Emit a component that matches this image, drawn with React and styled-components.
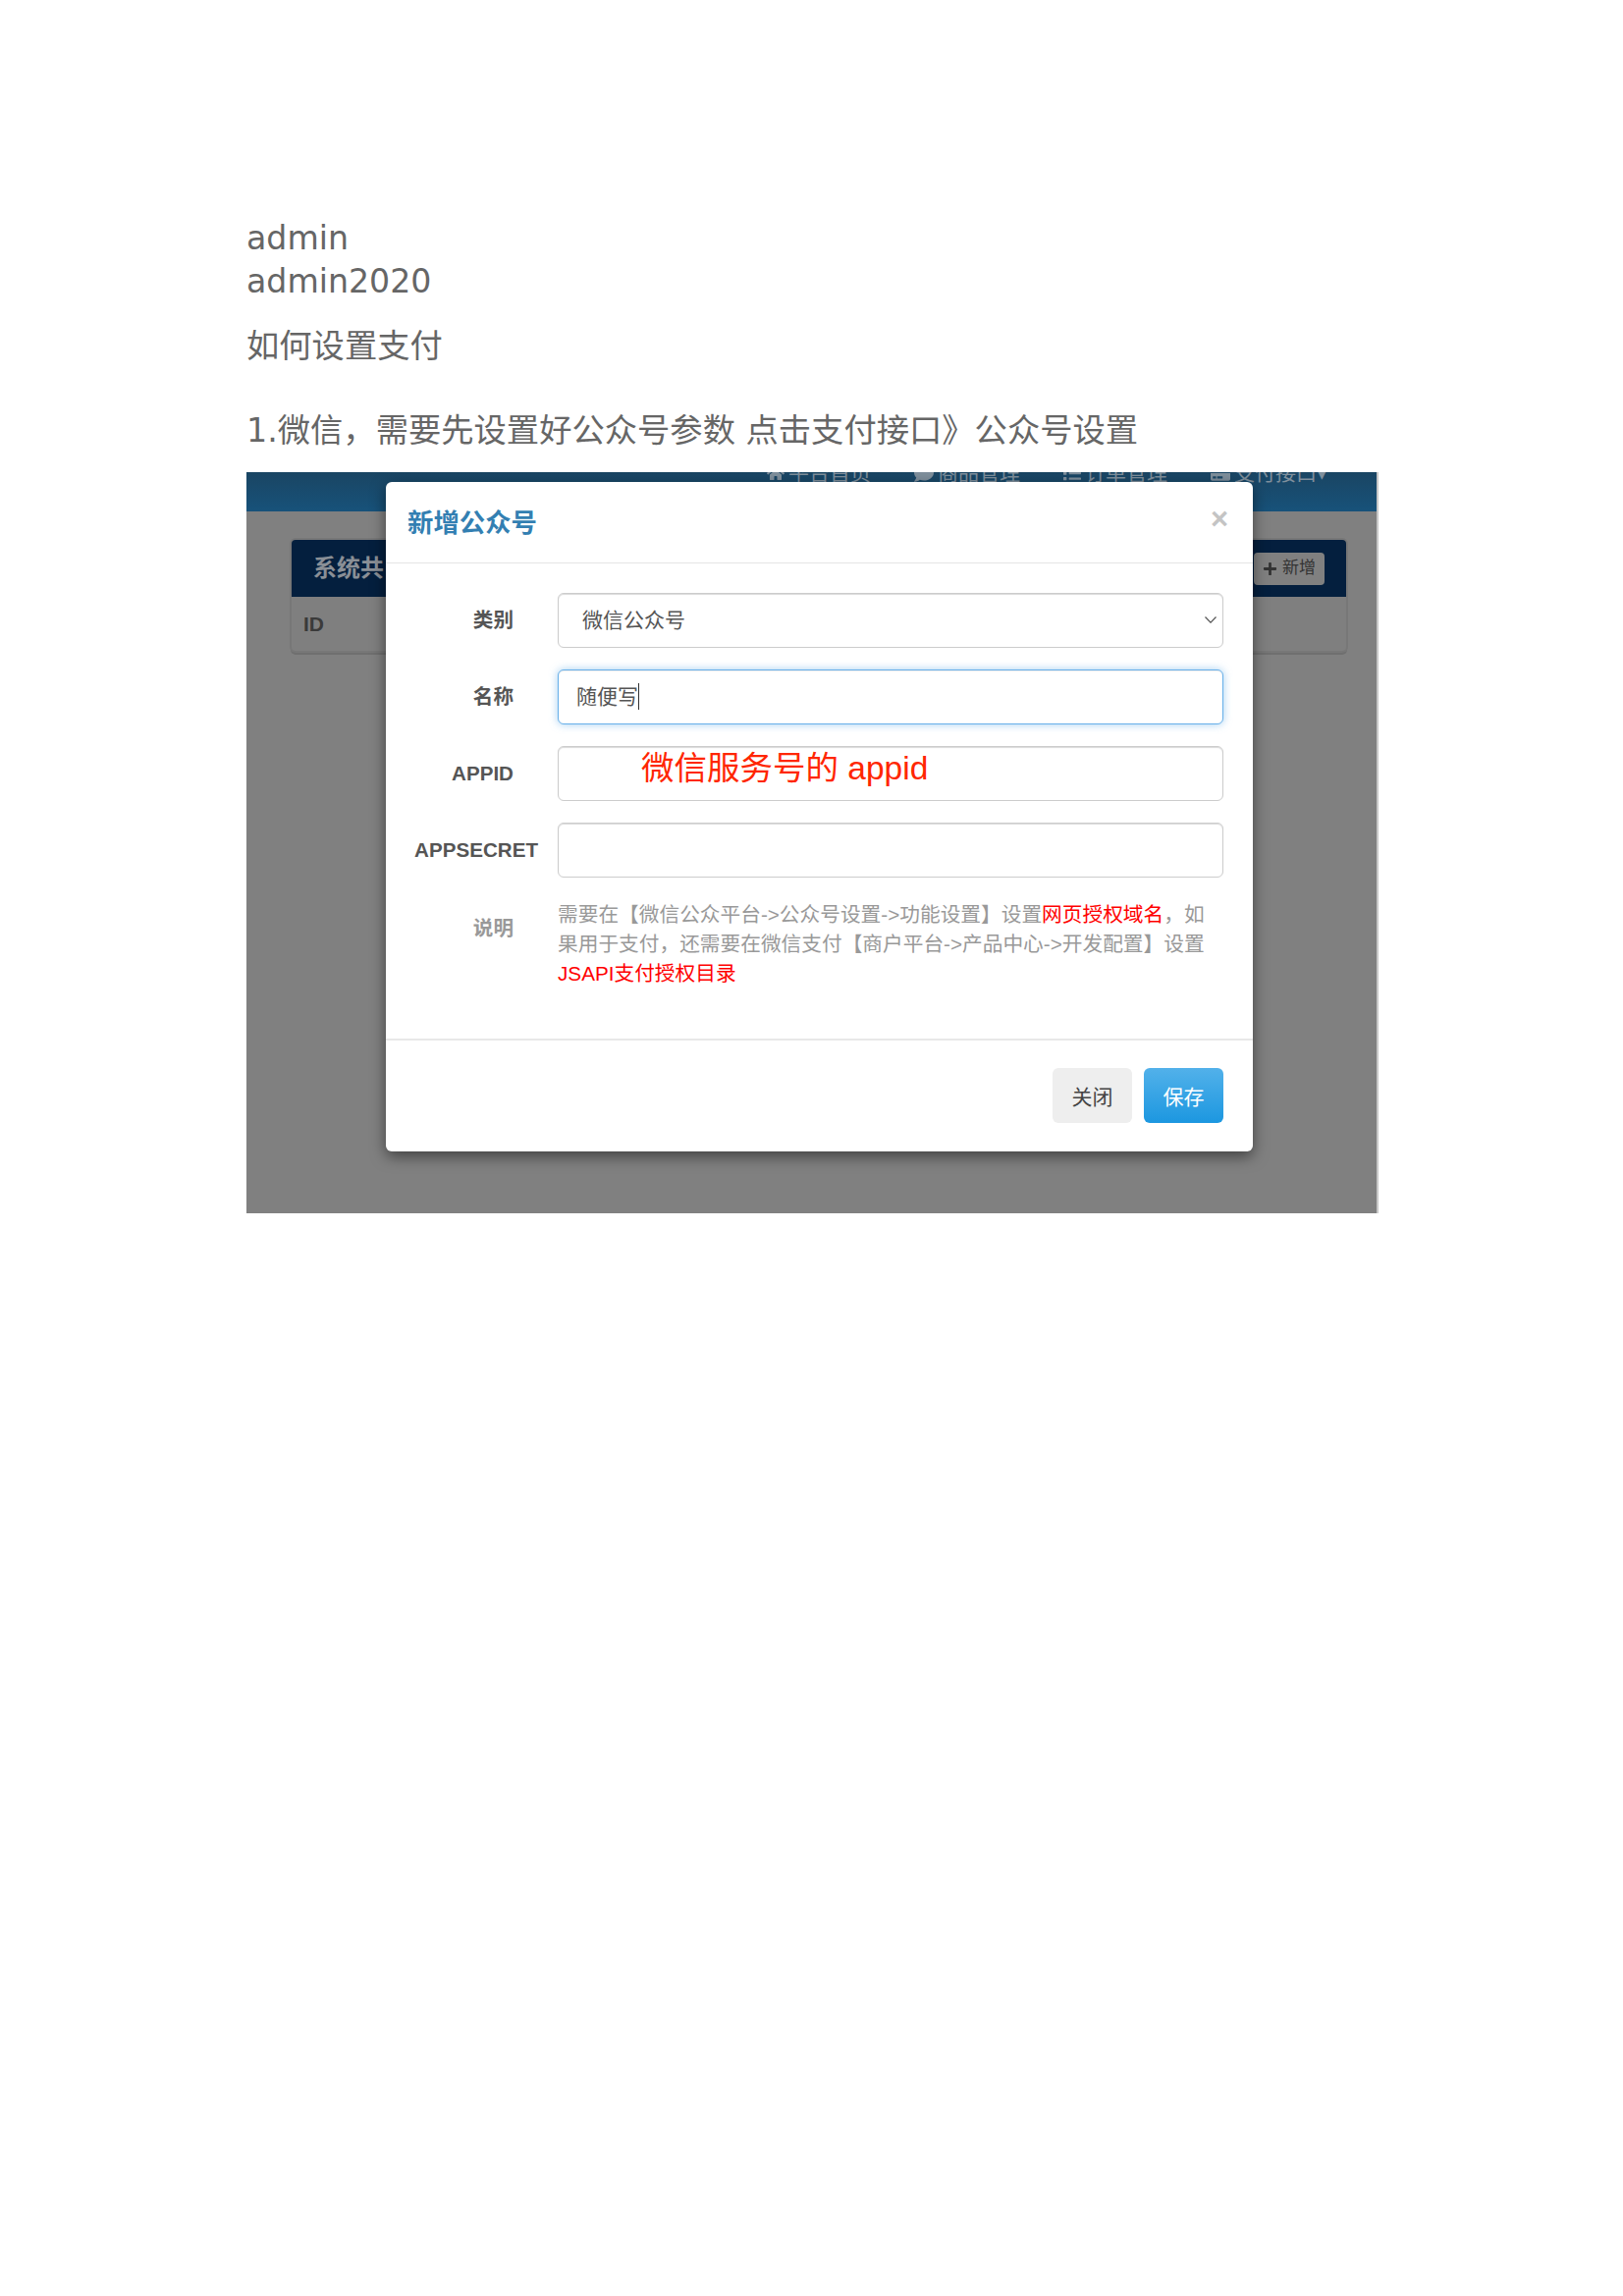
import styled, { createGlobalStyle } from 'styled-components';
import { FaHome, FaComment, FaList, FaCreditCard, FaPlus } from 'react-icons/fa';

const GlobalStyle = createGlobalStyle`
  html, body {
    margin: 0;
    padding: 0;
    background: #ffffff;
  }
`;

const uiFont = `"Liberation Sans", "Noto Sans CJK SC", sans-serif`;

const Page = styled.div`
  width: 1653px;
  height: 2339px;
  box-sizing: border-box;
  padding: 221px 0 0 251px;
  font-family: "DejaVu Sans", "Noto Sans CJK SC", sans-serif;
  font-size: 33.3px;
  line-height: 43.5px;
  color: #666666;
`;

const Credentials = styled.div`
  margin-bottom: 23px;
  font-size: 33.2px;
`;

const Paragraph = styled.p`
  margin: 0 0 ${props => props.$gap || 0}px;
  white-space: nowrap;
`;

const Shot = styled.div`
  position: relative;
  width: 1153px;
  height: 755px;
  box-sizing: border-box;
  overflow: hidden;
  background: #808080;
  border-right: 2px solid #c8c8c8;
  font-family: ${uiFont};
`;

const TopBar = styled.div`
  height: 40px;
  overflow: hidden;
  display: flex;
  justify-content: flex-end;
  gap: 44px;
  padding-right: 50px;
  background: linear-gradient(180deg, #1a4563 0%, #17527a 100%);
`;

const NavItem = styled.span`
  display: flex;
  align-items: center;
  gap: 4px;
  height: 26px;
  margin-top: -12px;
  font-size: 21px;
  line-height: 26px;
  color: #7f8f9c;
  white-space: nowrap;
`;

const PanelArea = styled.div`
  padding: 29px 31px 0 46px;
`;

const Panel = styled.div`
  height: 113px;
  border-radius: 4px;
  background: #7f7f7f;
  box-shadow: 0 0 0 2px #777777, 0 3px 0 1px #6f6f6f;
  overflow: hidden;
`;

const PanelHead = styled.div`
  height: 58px;
  display: flex;
  align-items: center;
  justify-content: space-between;
  padding: 1px 22px 0;
  box-sizing: border-box;
  background: #041f3e;
  font-size: 24px;
  font-weight: 700;
  color: #8a8f96;
`;

const AddButton = styled.span`
  display: flex;
  align-items: center;
  gap: 5px;
  height: 33px;
  padding: 0 9px;
  border-radius: 4px;
  background: #808080;
  font-size: 17px;
  font-weight: 400;
  color: #333333;
`;

const IdCell = styled.div`
  padding: 15px 12px;
  font-size: 21px;
  line-height: 26px;
  font-weight: 700;
  color: #3a3a3a;
`;

const Modal = styled.div`
  position: absolute;
  left: 142px;
  top: 10px;
  width: 883px;
  height: 682px;
  display: flex;
  flex-direction: column;
  border-radius: 6px;
  background: #ffffff;
  box-shadow: 0 5px 15px rgba(0, 0, 0, 0.5);
`;

const ModalHeader = styled.div`
  height: 83px;
  flex: none;
  box-sizing: border-box;
  display: flex;
  align-items: center;
  justify-content: space-between;
  padding: 0 25px 0 22px;
  border-bottom: 1px solid #e5e5e5;
`;

const ModalTitle = styled.h4`
  margin: 0;
  padding-top: 3px;
  font-size: 26.4px;
  line-height: 36px;
  font-weight: 700;
  color: #337fb2;
`;

const CloseMark = styled.span`
  margin-top: -6px;
  font-size: 31px;
  line-height: 1;
  font-weight: 700;
  color: #c4c4c4;
`;

const ModalBody = styled.div`
  flex: 1;
  display: flex;
  flex-direction: column;
  gap: 22px;
  padding: 30px 30px 0 0;
`;

const Row = styled.div`
  display: grid;
  grid-template-columns: 130px 1fr;
  column-gap: 45px;
  align-items: ${props => (props.$top ? 'start' : 'center')};
`;

const Label = styled.label`
  text-align: right;
  font-size: 20.6px;
  line-height: 28px;
  font-weight: 700;
  white-space: nowrap;
  color: ${props => (props.$muted ? '#999999' : '#555555')};
  margin-right: ${props => (props.$wide ? '-25px' : '0')};
  padding-top: ${props => (props.$top ? '16px' : '0')};
`;

const Field = styled.div`
  position: relative;
  height: 56px;
  box-sizing: border-box;
  display: flex;
  align-items: center;
  justify-content: ${props => (props.$select ? 'space-between' : 'flex-start')};
  padding: 0 ${props => (props.$select ? '6px' : '17px')} 0 ${props => (props.$select ? '24px' : '18px')};
  border-radius: 6px;
  background: #ffffff;
  border: 1px solid ${props => (props.$focused ? '#66afe9' : '#cccccc')};
  box-shadow: ${props =>
    props.$focused
      ? 'inset 0 1px 1px rgba(0,0,0,.075), 0 0 8px rgba(102,175,233,.6)'
      : 'inset 0 1px 1px rgba(0,0,0,.15)'};
  font-size: 21px;
  color: #555555;
`;

const Caret = styled.span`
  width: 1px;
  height: 27px;
  background: #333333;
`;

const Annotation = styled.span`
  position: absolute;
  left: 84px;
  top: 0;
  font-size: 33.5px;
  line-height: 44px;
  color: #ff2600;
  white-space: nowrap;
`;

const Help = styled.div`
  width: 670px;
  padding-top: 1px;
  font-size: 20.7px;
  line-height: 30px;
  color: #999999;
`;

const Red = styled.span`
  color: #ff0000;
`;

const ModalFooter = styled.div`
  height: 115px;
  flex: none;
  box-sizing: border-box;
  display: flex;
  justify-content: flex-end;
  gap: 12px;
  padding: 28px 30px 0 0;
  border-top: 2px solid #e8e8e8;
`;

const Button = styled.button`
  width: 81px;
  height: 56px;
  padding: 0;
  border: 0;
  border-radius: 6px;
  font-family: inherit;
  font-size: 21px;
  color: ${props => (props.$primary ? '#ffffff' : '#444444')};
  background: ${props =>
    props.$primary ? 'linear-gradient(180deg, #52b1ea 0%, #1c97e0 100%)' : '#eeeeee'};
`;

const Chevron = () => (
  <svg width="12" height="7" viewBox="0 0 12 7" fill="none" stroke="#555555" strokeWidth="1.2">
    <path d="M0.5 0.5L6 6.2L11.5 0.5" />
  </svg>
);

const App = () => (
  <>
    <GlobalStyle />
    <Page>
      <Credentials>
        <Paragraph>admin</Paragraph>
        <Paragraph>admin2020</Paragraph>
      </Credentials>
      <Paragraph $gap={42.5}>如何设置支付</Paragraph>
      <Paragraph $gap={20}>1.微信，需要先设置好公众号参数 点击支付接口》公众号设置</Paragraph>
      <Shot>
        <TopBar>
          <NavItem><FaHome size={18} />平台首页</NavItem>
          <NavItem><FaComment size={20} />商品管理</NavItem>
          <NavItem><FaList size={18} />订单管理</NavItem>
          <NavItem><FaCreditCard size={20} />支付接口▾</NavItem>
        </TopBar>
        <PanelArea>
          <Panel>
            <PanelHead>
              <span>系统共</span>
              <AddButton><FaPlus size={15} />新增</AddButton>
            </PanelHead>
            <IdCell>ID</IdCell>
          </Panel>
        </PanelArea>
        <Modal>
          <ModalHeader>
            <ModalTitle>新增公众号</ModalTitle>
            <CloseMark>×</CloseMark>
          </ModalHeader>
          <ModalBody>
            <Row>
              <Label>类别</Label>
              <Field $select>
                微信公众号
                <Chevron />
              </Field>
            </Row>
            <Row>
              <Label>名称</Label>
              <Field $focused>
                随便写
                <Caret />
              </Field>
            </Row>
            <Row>
              <Label>APPID</Label>
              <Field>
                <Annotation>微信服务号的 appid</Annotation>
              </Field>
            </Row>
            <Row>
              <Label $wide>APPSECRET</Label>
              <Field />
            </Row>
            <Row $top>
              <Label $muted $top>说明</Label>
              <Help>
                需要在【微信公众平台-&gt;公众号设置-&gt;功能设置】设置<Red>网页授权域名</Red>，如果用于支付，还需要在微信支付【商户平台-&gt;产品中心-&gt;开发配置】设置
                <Red>JSAPI支付授权目录</Red>
              </Help>
            </Row>
          </ModalBody>
          <ModalFooter>
            <Button>关闭</Button>
            <Button $primary>保存</Button>
          </ModalFooter>
        </Modal>
      </Shot>
    </Page>
  </>
);

export default App;
